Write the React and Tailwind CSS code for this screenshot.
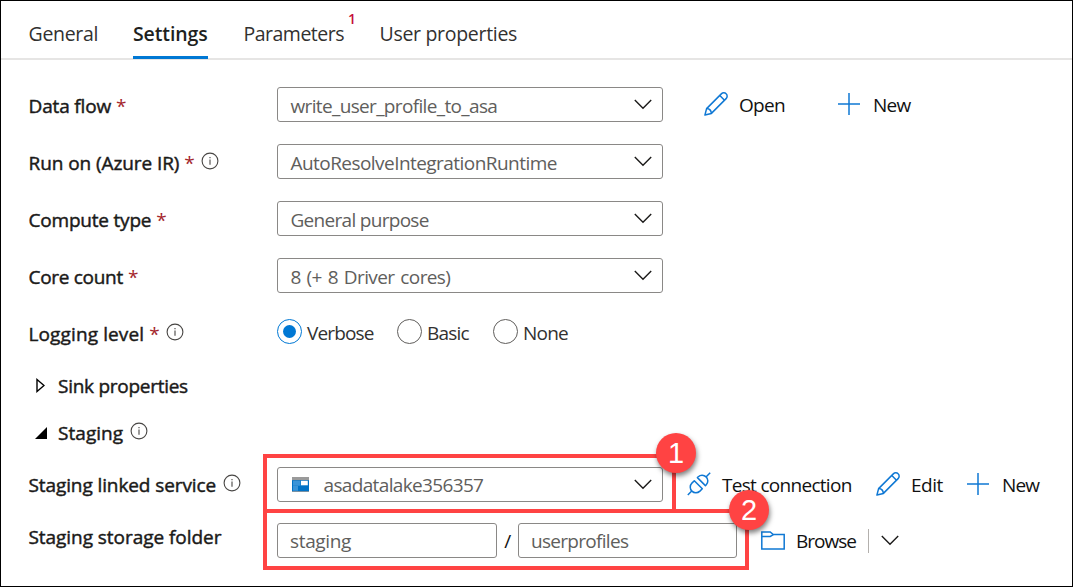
import React from 'react';

const Chevron = ({ className = '' }) => (
  <svg className={`shrink-0 ${className}`} width="18" height="11" viewBox="0 0 18 11" fill="none" stroke="#1b1a19" strokeWidth="1.4">
    <path d="M0.8 1L9 9.2L17.2 1" />
  </svg>
);

const Info = ({ className = '' }) => (
  <svg className={`shrink-0 ${className}`} width="18" height="18" viewBox="0 0 18 18" fill="none" stroke="#484644">
    <circle cx="9" cy="9" r="7.9" strokeWidth="1.1" />
    <path d="M9 7.4V12.8M9 5V6.3" strokeWidth="1.1" />
  </svg>
);

const Pencil = ({ className = '' }) => (
  <svg className={`relative -top-px shrink-0 ${className}`} width="24" height="24" viewBox="0 0 24 24" fill="none" stroke="#0f78d4" strokeWidth="1.5" strokeLinejoin="round">
    <path d="M0.9 23.1L2.6 16.6L17.3 1.9C18.7 0.5 20.9 0.5 22.1 1.8C23.5 3.1 23.5 5.2 22.1 6.6L7.4 21.4Z" />
    <path d="M15.8 3.5L20.5 8.2M2.6 16.6C5.2 16.8 7.2 18.7 7.4 21.4" />
  </svg>
);

const Plus = ({ className = '' }) => (
  <svg className={`relative -top-px shrink-0 ${className}`} width="22" height="22" viewBox="0 0 22 22" fill="none" stroke="#0f78d4" strokeWidth="1.5">
    <path d="M11 0V22M0 11H22" />
  </svg>
);

const Plug = ({ className = '' }) => (
  <svg className={`relative -top-px shrink-0 ${className}`} width="24" height="24" viewBox="0 0 24 24" fill="none" stroke="#0f78d4" strokeWidth="1.5" strokeLinejoin="round">
    <path d="M0.8 23L5 18.8M19 5L23.2 0.8" />
    <path d="M7.3 8.7L15.3 16.7L12.9 19.1C10.6 21.3 7.1 21.3 4.9 19.1C2.7 16.9 2.7 13.4 4.9 11.1Z" />
    <path d="M10.4 5.6L18.4 13.6L19.3 12.7C21.4 10.5 21.3 7.1 19.1 4.9C16.9 2.7 13.4 2.7 11.3 4.7Z" />
  </svg>
);

const Folder = ({ className = '' }) => (
  <svg className={`shrink-0 ${className}`} width="24" height="19" viewBox="0 0 24 19" fill="none" stroke="#0f78d4" strokeWidth="1.5">
    <path d="M0.8 18.1V0.9H9.2L12.3 3.6H23.2V18.1Z" />
    <path d="M0.8 5.4H9.3L12.3 3.6" />
  </svg>
);

const Storage = () => (
  <svg className="shrink-0" width="17" height="15" viewBox="0 0 17 15">
    <rect width="17" height="15" fill="#9a9a9a" />
    <rect y="3.2" width="17" height="11" fill="#0072c6" />
    <path d="M1 3.7H8.5V8.8H1ZM1 9H6V13.8H1Z" fill="#3a94d8" />
    <path d="M9 3.8H15.8V8.3H9Z" fill="#fff" />
  </svg>
);

const Star = () => <span className="-mr-px ml-[5px] tracking-normal text-[#a4262c]">*</span>;

const Label = ({ children, required, info, spacing, className = '' }) => (
  <div className={`flex w-[249px] shrink-0 items-center pl-[0.5px] pt-[2px] text-[#1b1a19] ${className}`}>
    <span className={`whitespace-nowrap [-webkit-text-stroke:0.45px_#1b1a19] ${spacing}`}>{children}</span>
    {required && <Star />}
    {info && <Info className="relative -top-[2px] ml-[7px]" />}
  </div>
);

const Select = ({ children, spacing, icon }) => (
  <div className="flex h-[35px] w-[386px] shrink-0 items-center rounded-[3px] border-[1.5px] border-[#8a8886] bg-white pl-3 pr-[10px] text-[#605e5c]">
    {icon && <span className="ml-[2px] mr-[14px]"><Storage /></span>}
    <span className={`grow whitespace-nowrap pl-[0.5px] ${icon ? 'pt-px' : 'pt-[2px]'} ${spacing}`}>{children}</span>
    <Chevron />
  </div>
);

const Radio = ({ children, checked, className, spacing }) => (
  <div className={`flex shrink-0 items-center text-[#323130] ${className}`}>
    <span className={`relative -top-px mr-[5px] flex size-[25px] items-center justify-center rounded-full border-[1.5px] ${checked ? 'border-[#0078d4]' : 'border-[#605e5c]'}`}>
      {checked && <span className="size-[13px] rounded-full bg-[#0078d4]" />}
    </span>
    <span className={`relative top-px whitespace-nowrap ${spacing}`}>{children}</span>
  </div>
);

const Tab = ({ children, active, className }) => (
  <div className={`flex h-[58px] shrink-0 items-center whitespace-nowrap text-[19.5px] ${active ? 'border-b-[3px] border-[#0078d4] pt-[11px] font-semibold text-[#201f1e]' : 'pl-[0.5px] pt-[8px] text-[#323130]'} ${className}`}>
    {children}
  </div>
);

const Badge = ({ children, className }) => (
  <div className={`absolute flex size-10 items-center justify-center rounded-full bg-[#ff4343] font-['Liberation_Sans',sans-serif] text-[29px] tracking-normal text-white shadow-[1px_3px_5px_rgba(0,0,0,0.5)] ${className}`}>
    {children}
  </div>
);

export default function App() {
  return (
    <div className="relative h-[587px] w-[1073px] overflow-hidden border border-black bg-white font-['Open_Sans','Noto_Sans',sans-serif] text-[19px] leading-6 tracking-[-0.5px]">
      <div className="flex h-[59px] border-b-2 border-[#e6e5e4] pl-[27px]">
        <Tab className="w-[105px] tracking-[-0.3px]">General</Tab>
        <Tab active className="mr-[35px] w-[75px] tracking-[-0.1px]">Settings</Tab>
        <Tab className="w-[136px]">
          Parameters
          <span className="mb-[31px] ml-[4px] text-[14px] font-semibold leading-4 text-[#c50f3c]">1</span>
        </Tab>
        <Tab className="tracking-[-0.3px]">User properties</Tab>
      </div>

      <div className="flex flex-col pl-[27px] pt-[27px]">
        <div className="mb-[22px] flex h-[35px] items-center">
          <Label required spacing="tracking-[-0.15px]">Data flow</Label>
          <Select spacing="tracking-[-0.65px]">write_user_profile_to_asa</Select>
          <Pencil className="ml-[41px]" />
          <span className="ml-[11px] w-[99px] tracking-[-0.7px] text-[#111]">Open</span>
          <Plus />
          <span className="ml-[13px] tracking-[-0.7px] text-[#111]">New</span>
        </div>
        <div className="mb-[22px] flex h-[35px] items-center">
          <Label required info spacing="tracking-[-0.08px]">Run on (Azure IR)</Label>
          <Select spacing="tracking-[-0.55px]">AutoResolveIntegrationRuntime</Select>
        </div>
        <div className="mb-[22px] flex h-[35px] items-center">
          <Label required spacing="tracking-[-0.2px]">Compute type</Label>
          <Select spacing="tracking-[-0.7px]">General purpose</Select>
        </div>
        <div className="mb-[22px] flex h-[35px] items-center">
          <Label required spacing="tracking-[-0.3px]">Core count</Label>
          <Select spacing="tracking-[-0.6px] [word-spacing:1.5px]">8 (+ 8 Driver cores)</Select>
        </div>
        <div className="flex h-[34px] items-center">
          <Label required info className="mt-[2px]" spacing="tracking-[0.12px]">Logging level</Label>
          <Radio checked className="w-[120px]" spacing="tracking-[-0.85px]">Verbose</Radio>
          <Radio className="w-[96px]" spacing="tracking-[-0.8px]">Basic</Radio>
          <Radio spacing="tracking-[-0.8px]">None</Radio>
        </div>

        <div className="mt-[24px] flex h-6 items-center text-[#1b1a19]">
          <svg className="ml-[8px] mr-[13px]" width="9" height="15" viewBox="0 0 9 15" fill="none" stroke="#000" strokeWidth="1.4">
            <path d="M1 1.5L8 7.5L1 13.5Z" />
          </svg>
          <span className="relative top-px tracking-[-0.27px] [-webkit-text-stroke:0.45px_#1b1a19]">Sink properties</span>
        </div>
        <div className="mt-[24px] flex h-6 items-center text-[#1b1a19]">
          <svg className="ml-[7px] mr-[11px]" width="12" height="12" viewBox="0 0 12 12">
            <path d="M12 0V12H0Z" />
          </svg>
          <span className="tracking-[0.05px] [-webkit-text-stroke:0.45px_#1b1a19]">Staging</span>
          <Info className="relative -top-[2px] ml-[7px]" />
        </div>

        <div className="mt-[22px] flex h-[35px] items-center">
          <Label info className="-mt-px" spacing="tracking-[-0.1px]">Staging linked service</Label>
          <Select icon spacing="tracking-[-0.65px]">asadatalake356357</Select>
          <Plug className="ml-[24px]" />
          <span className="ml-[11px] w-[154px] whitespace-nowrap tracking-[-0.7px] text-[#111]">Test connection</span>
          <Pencil />
          <span className="ml-[11px] w-[55px] text-[#111]">Edit</span>
          <Plus className="left-px" />
          <span className="ml-[14px] tracking-[-0.8px] text-[#111]">New</span>
        </div>
        <div className="mt-[21px] flex h-[35px] items-center">
          <Label className="mb-[9px]" spacing="tracking-[-0.05px]">Staging storage folder</Label>
          <div className="flex h-[35px] w-[220px] items-center rounded-[3px] border-[1.5px] border-[#8a8886] pl-3 pt-px tracking-[-0.35px] text-[#605e5c]">staging</div>
          <span className="w-[21px] text-center text-[#111]">/</span>
          <div className="flex h-[35px] w-[219px] items-center rounded-[3px] border-[1.5px] border-[#8a8886] pl-3 pt-px tracking-[-0.7px] text-[#605e5c]">userprofiles</div>
          <Folder className="ml-[24px]" />
          <span className="ml-[11px] w-[72px] pt-px tracking-[-1px] text-[#111]">Browse</span>
          <span className="mr-[12px] h-6 w-px bg-[#b3b0ad]" />
          <Chevron />
        </div>
      </div>

      <div className="absolute left-[262px] top-[453px] h-[59px] w-[413px] border-4 border-[#ff4343]" />
      <div className="absolute left-[262px] top-[508px] h-[61px] w-[486px] border-4 border-[#ff4343]" />
      <Badge className="left-[655px] top-[432px]">1</Badge>
      <Badge className="left-[728px] top-[489px]">2</Badge>
    </div>
  );
}
